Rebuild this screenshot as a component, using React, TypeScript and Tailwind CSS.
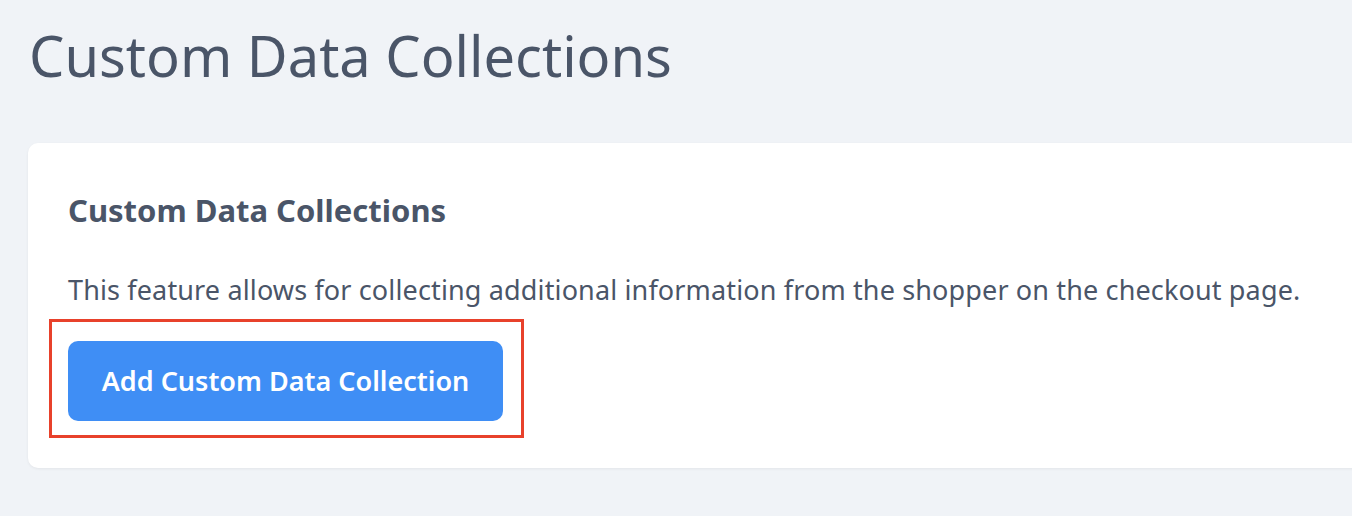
export default function App() {
  return (
    <div
      className="min-h-screen bg-[#f0f3f7] text-[#4a5568] pl-[28px] pt-[15px] overflow-hidden"
      style={{ fontFamily: '"Noto Sans", "Open Sans", sans-serif' }}
    >
      <h1 className="text-[56px] leading-[80px] font-normal pl-[1px] tracking-[0px]">Custom Data Collections</h1>

      <div className="mt-[48px] w-[1400px] h-[325px] bg-white rounded-[10px] shadow-[0_1px_3px_rgba(0,0,0,0.06)] pl-[40px] pt-[47px]">
        <h2 className="text-[31px] leading-[40px] font-bold">Custom Data Collections</h2>
        <p className="mt-[43px] text-[27px] leading-[34px] tracking-[0.14px]">
          This feature allows for collecting additional information from the shopper on the checkout page.
        </p>
        <div className="mt-[12px] ml-[-19px] w-[475px] h-[119px] border-[3px] border-[#e8412b] pl-[16px] pt-[19px]">
          <button
            type="button"
            className="w-[435px] h-[80px] rounded-[10px] bg-[#3f8ef5] text-white text-[27px] font-semibold"
          >
            Add Custom Data Collection
          </button>
        </div>
      </div>
    </div>
  );
}
